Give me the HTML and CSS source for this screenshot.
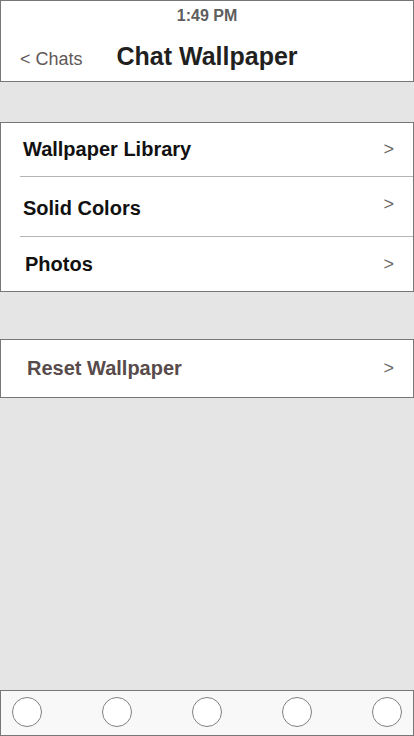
FILE: index.html
```html
<!DOCTYPE html>
<html>
<head>
<meta charset="utf-8">
<link rel="stylesheet" href="styles.css">
</head>
<body>
<div class="screen">
  <header class="header">
    <div class="status">1:49 PM</div>
    <div class="nav">
      <span class="back">&lt; Chats</span>
      <span class="title">Chat Wallpaper</span>
    </div>
  </header>

  <section class="group group-main">
    <div class="row row-1"><span class="label">Wallpaper Library</span><span class="chev">&gt;</span></div>
    <div class="divider"></div>
    <div class="row row-2"><span class="label">Solid Colors</span><span class="chev chev-up">&gt;</span></div>
    <div class="divider"></div>
    <div class="row row-3"><span class="label label-photos">Photos</span><span class="chev">&gt;</span></div>
  </section>

  <section class="group group-reset">
    <div class="row row-reset"><span class="label label-reset">Reset Wallpaper</span><span class="chev">&gt;</span></div>
  </section>

  <nav class="tabbar">
    <span class="tab"></span>
    <span class="tab"></span>
    <span class="tab"></span>
    <span class="tab"></span>
    <span class="tab"></span>
  </nav>
</div>
</body>
</html>
```
FILE: styles.css
```css
* { box-sizing: border-box; }
html, body { margin: 0; padding: 0; }
body {
  background: #e5e5e5;
  font-family: "Liberation Sans", Arial, sans-serif;
  width: 414px;
  height: 736px;
  overflow: hidden;
}
.screen {
  display: flex;
  flex-direction: column;
  height: 736px;
}
.header {
  height: 82px;
  background: #fff;
  border: 1px solid #777;
  padding-top: 5px;
}
.status {
  text-align: center;
  font-weight: bold;
  font-size: 16px;
  line-height: 20px;
  color: #5e5e5e;
}
.nav {
  display: flex;
  align-items: baseline;
  margin-top: 15px;
  padding-left: 19px;
  gap: 34px;
}
.back {
  font-size: 18px;
  color: #5f5858;
}
.title {
  font-size: 25px;
  line-height: 30px;
  font-weight: bold;
  color: #221f1f;
}
.group {
  background: #fff;
  border: 1px solid #777;
}
.group-main { margin-top: 40px; }
.group-reset { margin-top: 47px; }
.row {
  display: flex;
  align-items: center;
  justify-content: space-between;
  padding-left: 22px;
  padding-right: 19px;
}
.row-1 { height: 53px; }
.row-2 { height: 59px; padding-top: 4px; }
.row-3 { height: 54px; }
.row-reset { height: 57px; }
.divider {
  height: 1px;
  margin-left: 19px;
  background: #b5b5b5;
}
.label {
  font-size: 20px;
  font-weight: bold;
  color: #111;
}
.label-photos { margin-left: 2px; }
.label-reset { margin-left: 4px; color: #584b4b; }
.chev {
  font-size: 18px;
  color: #6a6a6a;
}
.chev-up { margin-top: -8px; }
.tabbar {
  margin-top: auto;
  height: 46px;
  background: #f9f8f8;
  border: 1px solid #777;
  display: flex;
  gap: 60px;
  padding-left: 11px;
  padding-top: 6px;
}
.tab {
  width: 30px;
  height: 30px;
  border-radius: 50%;
  background: #fff;
  border: 1px solid #808080;
}
```
